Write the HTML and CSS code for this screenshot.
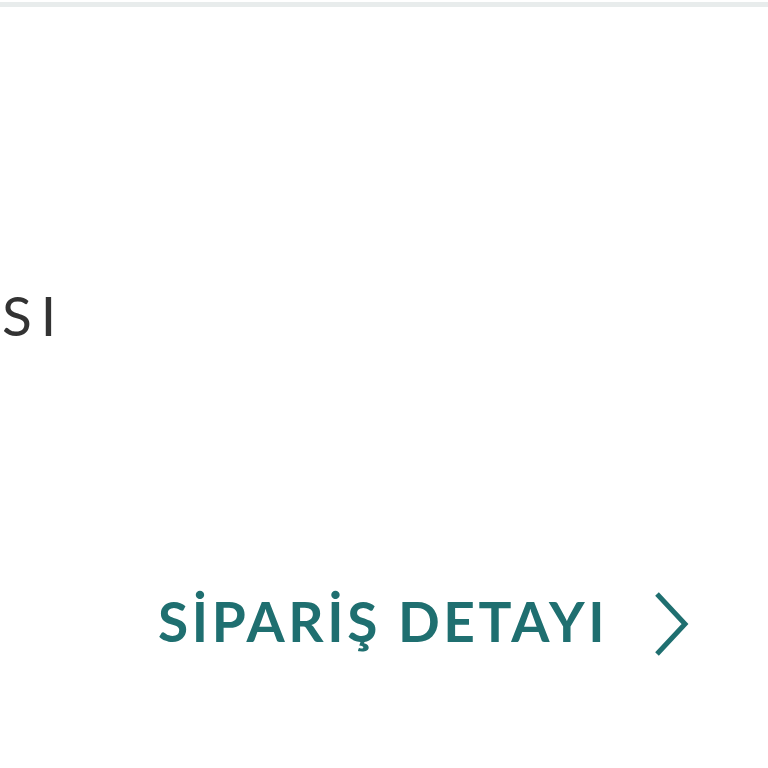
FILE: index.html
```html
<!DOCTYPE html>
<html lang="tr">
  <head>
    <meta charset="UTF-8" />
    <title>Sipariş</title>
    <link rel="stylesheet" href="styles.css">
  </head>
  <body>
    <div class="order-card">
      <div class="order-status">SI</div>
      <a href="#" class="order-link">
        <span>SİPARİŞ DETAYI</span>
        <svg class="chevron" width="40" height="66" viewBox="0 0 40 66">
          <path d="M5 3 L33 33 L5 63" fill="none" stroke="currentColor" stroke-width="5" />
        </svg>
      </a>
    </div>
  </body>
</html>
```

FILE: styles.css
```css
/* ======= Глобальные стили ======= */
* {
  box-sizing: border-box;
  margin: 0;
  padding: 0;
}

body {
  font-family: "Lato", sans-serif;
  background-color: #ffffff;
  width: 768px;
  height: 768px;
  overflow: hidden;
}

/* ======= Карточка заказа ======= */
.order-card {
  border-top: 5px solid #e8ecec;
  margin-top: 2px;
  height: 766px;
  display: flex;
  flex-direction: column;
}

.order-status {
  margin-top: 281px;
  padding-left: 2px;
  font-size: 55px;
  font-weight: 400;
  letter-spacing: 9px;
  color: #333;
  line-height: 1;
}

.order-link {
  margin-top: 242px;
  margin-left: 158px;
  display: flex;
  align-items: center;
  gap: 44px;
  text-decoration: none;
  color: #1f6f70;
  font-size: 55px;
  font-weight: 700;
  letter-spacing: 3.6px;
  line-height: 1;
}

.chevron {
  margin-top: 6px;
}
```
